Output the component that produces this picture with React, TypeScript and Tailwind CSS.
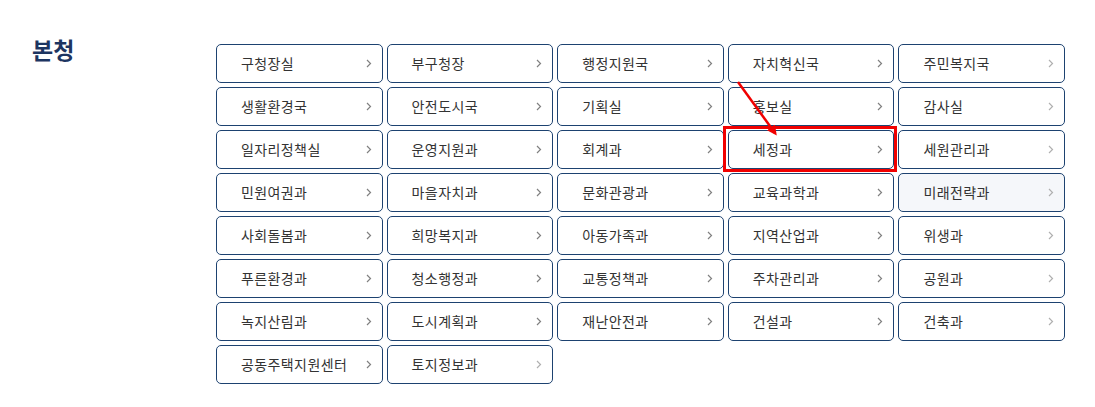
const depts = [
  '구청장실', '부구청장', '행정지원국', '자치혁신국', '주민복지국',
  '생활환경국', '안전도시국', '기획실', '홍보실', '감사실',
  '일자리정책실', '운영지원과', '회계과', '세정과', '세원관리과',
  '민원여권과', '마을자치과', '문화관광과', '교육과학과', '미래전략과',
  '사회돌봄과', '희망복지과', '아동가족과', '지역산업과', '위생과',
  '푸른환경과', '청소행정과', '교통정책과', '주차관리과', '공원과',
  '녹지산림과', '도시계획과', '재난안전과', '건설과', '건축과',
  '공동주택지원센터', '토지정보과',
];

const Chevron = ({ light }: { light?: boolean }) => (
  <svg width="6" height="9" viewBox="0 0 6 9" className={light ? 'text-[#b0b0b0]' : 'text-[#808080]'}>
    <path d="M1 1l3.5 3.5L1 8" fill="none" stroke="currentColor" strokeWidth="1.2" />
  </svg>
);

const App = () => {
  return (
    <div
      className="relative w-[1095px] h-[407px] bg-white"
      style={{ fontFamily: '"Noto Sans CJK KR", "Noto Sans", sans-serif' }}
    >
      <div className="flex pt-[44px]">
        {/* 제목 */}
        <div className="w-[216px] pl-[32px]">
          <h2 className="text-[23px] font-bold leading-none text-[#1d3561] -mt-[6px]">본청</h2>
        </div>

        {/* 부서 목록 */}
        <ul className="grid grid-cols-5 w-[849px] gap-x-[4px] gap-y-[4px]">
          {depts.map((name, i) => {
            const hovered = name === '미래전략과';
            const marked = name === '세정과';
            return (
              <li key={name} className="relative">
                <a
                  className={`flex items-center justify-between h-[39px] pl-[24px] pr-[10px] border border-[#1d4270] rounded-[5px] text-[14px] text-[#333] ${
                    hovered ? 'bg-[#f5f7fa]' : 'bg-white'
                  }`}
                >
                  <span className="tracking-[0.4px]">{name}</span>
                  <Chevron light={i % 5 === 4 || name === '토지정보과'} />
                </a>
                {marked && (
                  <div className="absolute -left-[5px] -top-[4px] -right-[3px] -bottom-[3px] border-[3px] border-[#f00000] pointer-events-none" />
                )}
              </li>
            );
          })}
        </ul>
      </div>

      {/* 화살표 */}
      <svg className="absolute left-0 top-0 pointer-events-none" width="1095" height="407">
        <defs>
          <marker id="ah" markerWidth="10" markerHeight="10" refX="7" refY="5" orient="auto" markerUnits="userSpaceOnUse">
            <path d="M0 0L10 5L0 10z" fill="#f00000" />
          </marker>
        </defs>
        <line x1="738" y1="82" x2="775" y2="133" stroke="#f00000" strokeWidth="2.5" markerEnd="url(#ah)" />
      </svg>
    </div>
  );
};

export default App;
